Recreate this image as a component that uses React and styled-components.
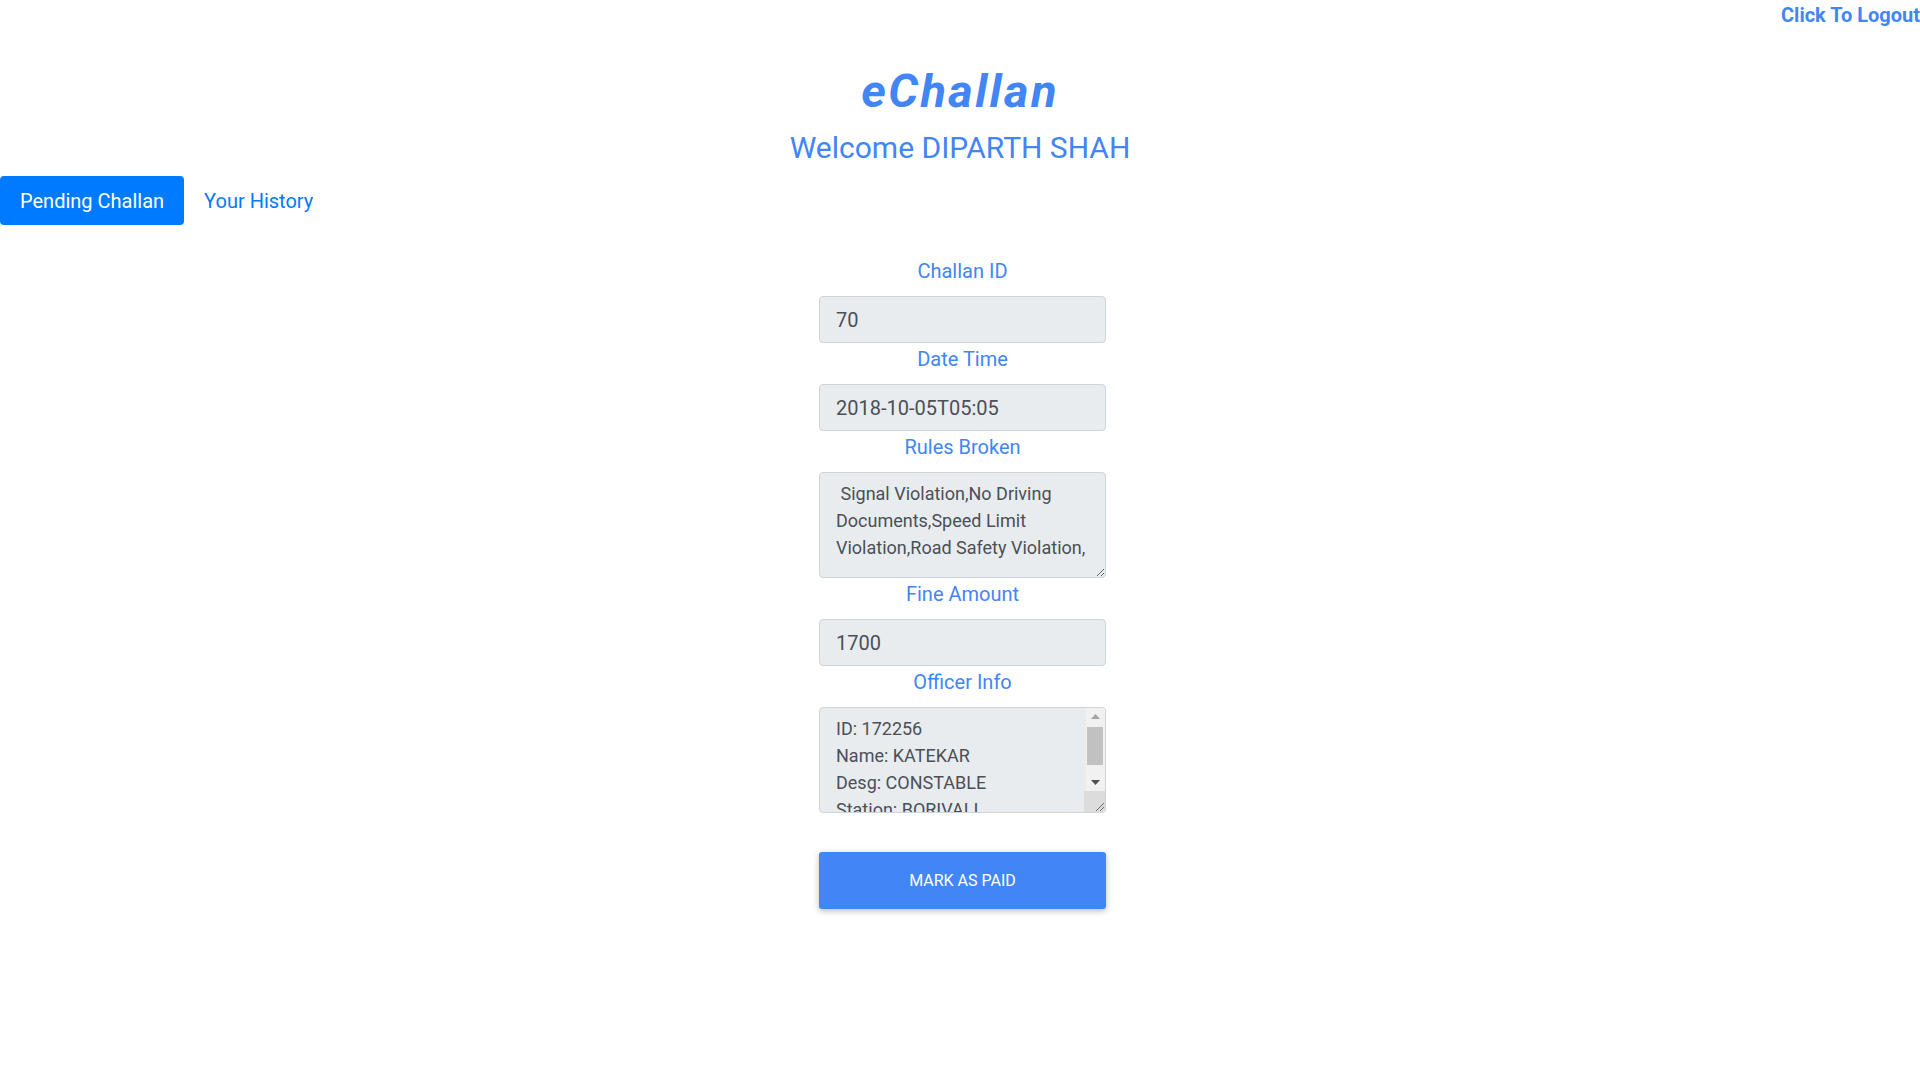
import styled, { createGlobalStyle } from "styled-components";

const GlobalStyle = createGlobalStyle`
  html, body {
    margin: 0;
    padding: 0;
    background: #ffffff;
    font-family: Roboto, "Liberation Sans", sans-serif;
  }
`;

const Page = styled.div`
  display: flex;
  flex-direction: column;
  min-height: 1080px;
`;

const TopBar = styled.div`
  display: flex;
  justify-content: flex-end;
  height: 30px;
`;

const LogoutLink = styled.a`
  margin-top: 3px;
  font-size: 20px;
  line-height: 24px;
  font-weight: 700;
  color: #4285f4;
  cursor: pointer;
`;

const Title = styled.h1`
  margin: 33px 0 0;
  text-align: center;
  font-size: 47px;
  line-height: 55px;
  font-weight: 700;
  font-style: italic;
  letter-spacing: 2.4px;
  color: #4285f4;
`;

const Welcome = styled.h3`
  margin: 12px 0 0;
  text-align: center;
  font-size: 30px;
  line-height: 36px;
  font-weight: 400;
  color: #4285f4;
`;

const Tabs = styled.nav`
  display: flex;
  margin-top: 10px;
`;

const Tab = styled.a`
  display: block;
  padding: 9.5px 20px;
  font-size: 20px;
  line-height: 30px;
  border-radius: 4px;
  cursor: pointer;
  color: ${(props) => (props.active ? "#ffffff" : "#007bff")};
  background: ${(props) => (props.active ? "#007bff" : "transparent")};
`;

const FormWrap = styled.div`
  display: flex;
  justify-content: center;
  padding-left: 5px;
  margin-top: 30px;
`;

const Form = styled.form`
  display: flex;
  flex-direction: column;
  width: 287px;
`;

const Label = styled.label`
  display: block;
  margin: 1px 0 10px;
  text-align: center;
  font-size: 20px;
  line-height: 30px;
  color: #4285f4;
`;

const Input = styled.input`
  box-sizing: border-box;
  width: 100%;
  height: 47px;
  padding: 7px 16px;
  font-family: Roboto, "Liberation Sans", sans-serif;
  font-size: 20px;
  line-height: 30px;
  color: #495057;
  background: #e9ecef;
  border: 1px solid #ced4da;
  border-radius: 4px;
  outline: none;
`;

const TextArea = styled.textarea`
  display: block;
  box-sizing: border-box;
  width: 100%;
  height: 106px;
  padding: 7px ${(props) => (props.scroll ? "24px" : "14px")} 7px 16px;
  font-family: Roboto, "Liberation Sans", sans-serif;
  font-size: 18px;
  line-height: 27px;
  color: #495057;
  background: #e9ecef;
  border: 1px solid #ced4da;
  border-radius: 4px;
  outline: none;
  overflow: ${(props) => (props.scroll ? "hidden" : "auto")};
`;

const ScrollField = styled.div`
  position: relative;
`;

const ScrollBar = styled.div`
  position: absolute;
  top: 1px;
  right: 1px;
  bottom: 22px;
  width: 19px;
  display: flex;
  flex-direction: column;
  background: #f1f1f1;
  border-top-right-radius: 3px;
`;

const ScrollButton = styled.div`
  height: 17px;
  display: flex;
  align-items: center;
  justify-content: center;
`;

const ScrollTrack = styled.div`
  flex: 1;
  padding: 2px 2px 0 1px;
`;

const ScrollThumb = styled.div`
  height: 38px;
  background: #c1c1c1;
`;

const Resizer = styled.div`
  position: absolute;
  right: 1px;
  bottom: 1px;
  width: 21px;
  height: 21px;
  background: #dcdcdc;
  border-bottom-right-radius: 3px;
  display: flex;
  align-items: flex-end;
  justify-content: flex-end;
`;

const PayButton = styled.button`
  margin-top: 39px;
  height: 57px;
  width: 100%;
  border: none;
  border-radius: 3px;
  background: #4285f4;
  color: #ffffff;
  font-family: Roboto, "Liberation Sans", sans-serif;
  font-size: 16px;
  text-transform: uppercase;
  box-shadow: 0 2px 5px 0 rgba(0, 0, 0, 0.16), 0 2px 10px 0 rgba(0, 0, 0, 0.12);
  cursor: pointer;
`;

function ScrollingTextArea({ value }) {
  return (
    <ScrollField>
      <TextArea readOnly scroll value={value} />
      <ScrollBar>
        <ScrollButton>
          <svg width="9" height="5" viewBox="0 0 9 5">
            <path d="M0 5 L4.5 0 L9 5 Z" fill="#a3a3a3" />
          </svg>
        </ScrollButton>
        <ScrollTrack>
          <ScrollThumb />
        </ScrollTrack>
        <ScrollButton>
          <svg width="9" height="5" viewBox="0 0 9 5">
            <path d="M0 0 L4.5 5 L9 0 Z" fill="#505050" />
          </svg>
        </ScrollButton>
      </ScrollBar>
      <Resizer>
        <svg width="12" height="12" viewBox="0 0 12 12">
          <path d="M11 3 L3 11 M11 7 L7 11" stroke="#6e6e6e" strokeWidth="1" />
        </svg>
      </Resizer>
    </ScrollField>
  );
}

const challan = {
  id: "70",
  dateTime: "2018-10-05T05:05",
  rules: " Signal Violation,No Driving Documents,Speed Limit Violation,Road Safety Violation,",
  fine: "1700",
  officer: "ID: 172256\nName: KATEKAR\nDesg: CONSTABLE\nStation: BORIVALI\n",
};

export default function App() {
  return (
    <Page>
      <GlobalStyle />
      <TopBar>
        <LogoutLink>Click To Logout</LogoutLink>
      </TopBar>
      <Title>eChallan</Title>
      <Welcome>Welcome DIPARTH SHAH</Welcome>
      <Tabs>
        <Tab active>Pending Challan</Tab>
        <Tab>Your History</Tab>
      </Tabs>
      <FormWrap>
        <Form onSubmit={(e) => e.preventDefault()}>
          <Label>Challan ID</Label>
          <Input readOnly value={challan.id} />
          <Label>Date Time</Label>
          <Input readOnly value={challan.dateTime} />
          <Label>Rules Broken</Label>
          <TextArea readOnly value={challan.rules} />
          <Label>Fine Amount</Label>
          <Input readOnly value={challan.fine} />
          <Label>Officer Info</Label>
          <ScrollingTextArea value={challan.officer} />
          <PayButton type="button">Mark as paid</PayButton>
        </Form>
      </FormWrap>
    </Page>
  );
}
